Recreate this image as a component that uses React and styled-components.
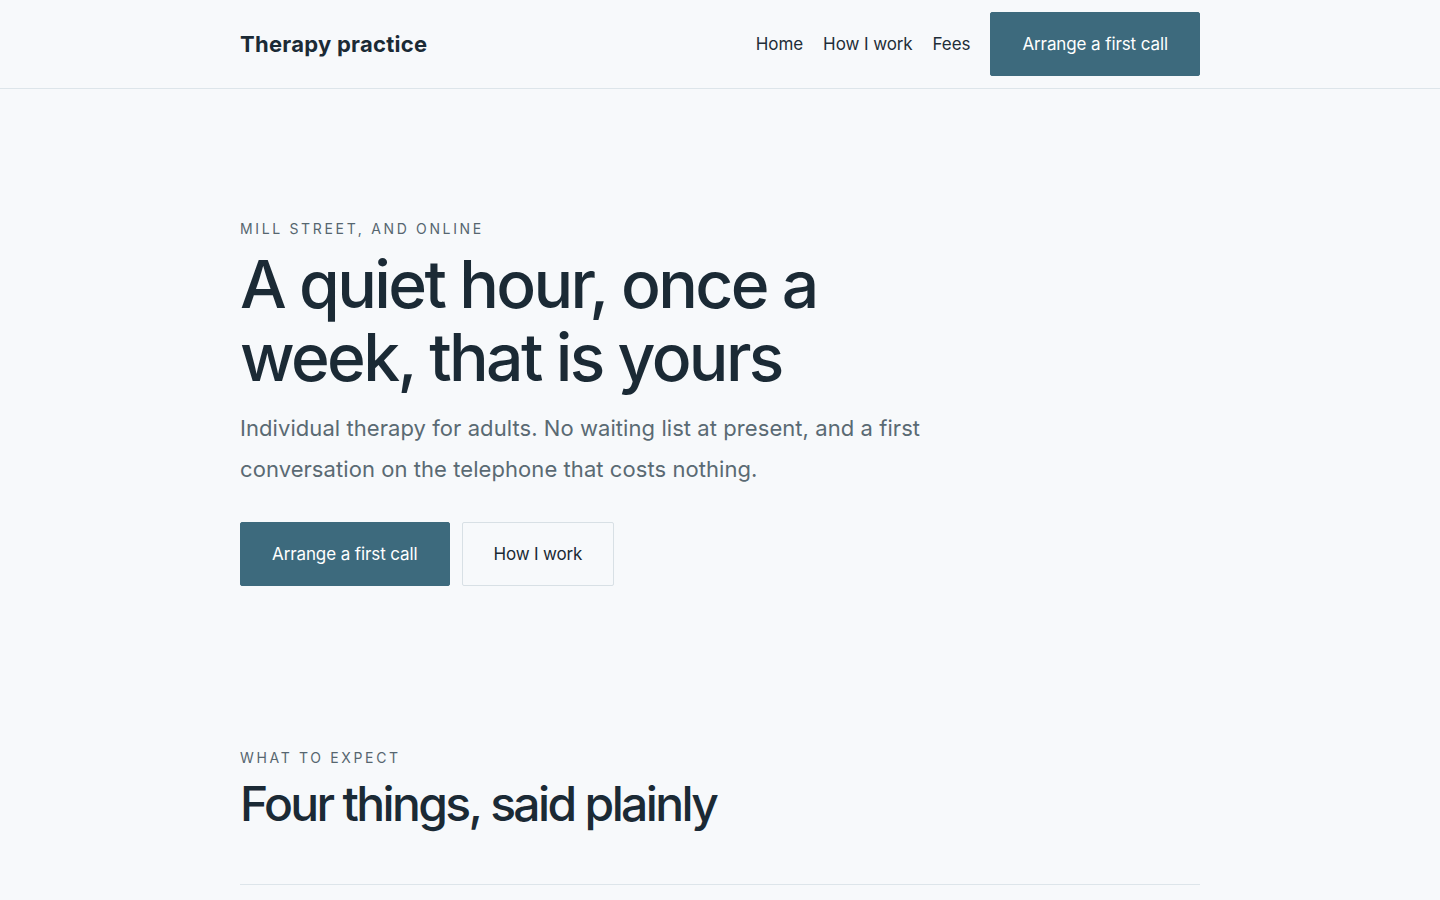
import React from "react";
import styled, { createGlobalStyle } from "styled-components";

const Global = createGlobalStyle`
  html, body { margin: 0; padding: 0; }
  body {
    background: #f7f9fb;
    color: #1b2a35;
    font-family: Inter, "Noto Sans", sans-serif;
    -webkit-font-smoothing: antialiased;
  }
  * { box-sizing: border-box; }
`;

const Header = styled.header`
  border-bottom: 1px solid #dde5ea;
`;

const Container = styled.div`
  width: 960px;
  margin: 0 auto;
`;

const HeaderInner = styled(Container)`
  height: 88px;
  display: flex;
  align-items: center;
  justify-content: space-between;
`;

const Brand = styled.a`
  font-size: 22px;
  font-weight: 700;
  letter-spacing: 0.012em;
  color: #1b2a35;
  text-decoration: none;
`;

const Nav = styled.nav`
  display: flex;
  align-items: center;
  gap: 20px;
`;

const NavLink = styled.a`
  font-size: 17px;
  color: #1f2d38;
  text-decoration: none;
  letter-spacing: -0.005em;
`;

const Button = styled.a`
  display: inline-flex;
  align-items: center;
  justify-content: center;
  height: 64px;
  padding: 0 31px;
  font-size: 17px;
  letter-spacing: ${(p) => (p.$ghost ? "-0.01em" : "-0.006em")};
  border-radius: 2px;
  text-decoration: none;
  background: ${(p) => (p.$ghost ? "transparent" : "#3d6a7d")};
  color: ${(p) => (p.$ghost ? "#1b2a35" : "#ffffff")};
  border: 1px solid ${(p) => (p.$ghost ? "#d8e0e5" : "#3d6a7d")};
`;

const Hero = styled.section`
  padding: 130px 0 0;
`;

const Eyebrow = styled.p`
  margin: 0;
  font-size: 14px;
  letter-spacing: 0.19em;
  text-transform: uppercase;
  color: #56666f;
  line-height: 20px;
`;

const Title = styled.h1`
  margin: 9px 0 0;
  font-size: 66px;
  line-height: 1.1;
  font-weight: 500;
  letter-spacing: -0.04em;
  color: #1b2a35;
  max-width: 640px;
`;

const Lead = styled.p`
  margin: 15px 0 0;
  font-size: 22px;
  line-height: 41px;
  letter-spacing: 0.003em;
  color: #5a6a73;
  max-width: 700px;
`;

const Actions = styled.div`
  display: flex;
  gap: 12px;
  margin-top: 32px;
`;

const Section = styled.section`
  padding-top: 162px;
`;

const SectionTitle = styled.h2`
  margin: 8px 0 0;
  font-size: 48px;
  line-height: 1.15;
  font-weight: 500;
  letter-spacing: -0.055em;
  color: #1b2a35;
`;

const Rule = styled.hr`
  margin: 53px 0 0;
  border: 0;
  border-top: 1px solid #dde5ea;
`;

export default function App() {
  return (
    <>
      <Global />
      <Header>
        <HeaderInner>
          <Brand href="#">Therapy practice</Brand>
          <Nav>
            <NavLink href="#">Home</NavLink>
            <NavLink href="#">How I work</NavLink>
            <NavLink href="#">Fees</NavLink>
            <Button href="#">Arrange a first call</Button>
          </Nav>
        </HeaderInner>
      </Header>
      <Hero>
        <Container>
          <Eyebrow>Mill Street, and online</Eyebrow>
          <Title>A quiet hour, once a week, that is yours</Title>
          <Lead>
            Individual therapy for adults. No waiting list at present, and a first
            conversation on the telephone that costs nothing.
          </Lead>
          <Actions>
            <Button href="#">Arrange a first call</Button>
            <Button href="#" $ghost>How I work</Button>
          </Actions>
        </Container>
      </Hero>
      <Section>
        <Container>
          <Eyebrow>What to expect</Eyebrow>
          <SectionTitle>Four things, said plainly</SectionTitle>
          <Rule />
        </Container>
      </Section>
    </>
  );
}
